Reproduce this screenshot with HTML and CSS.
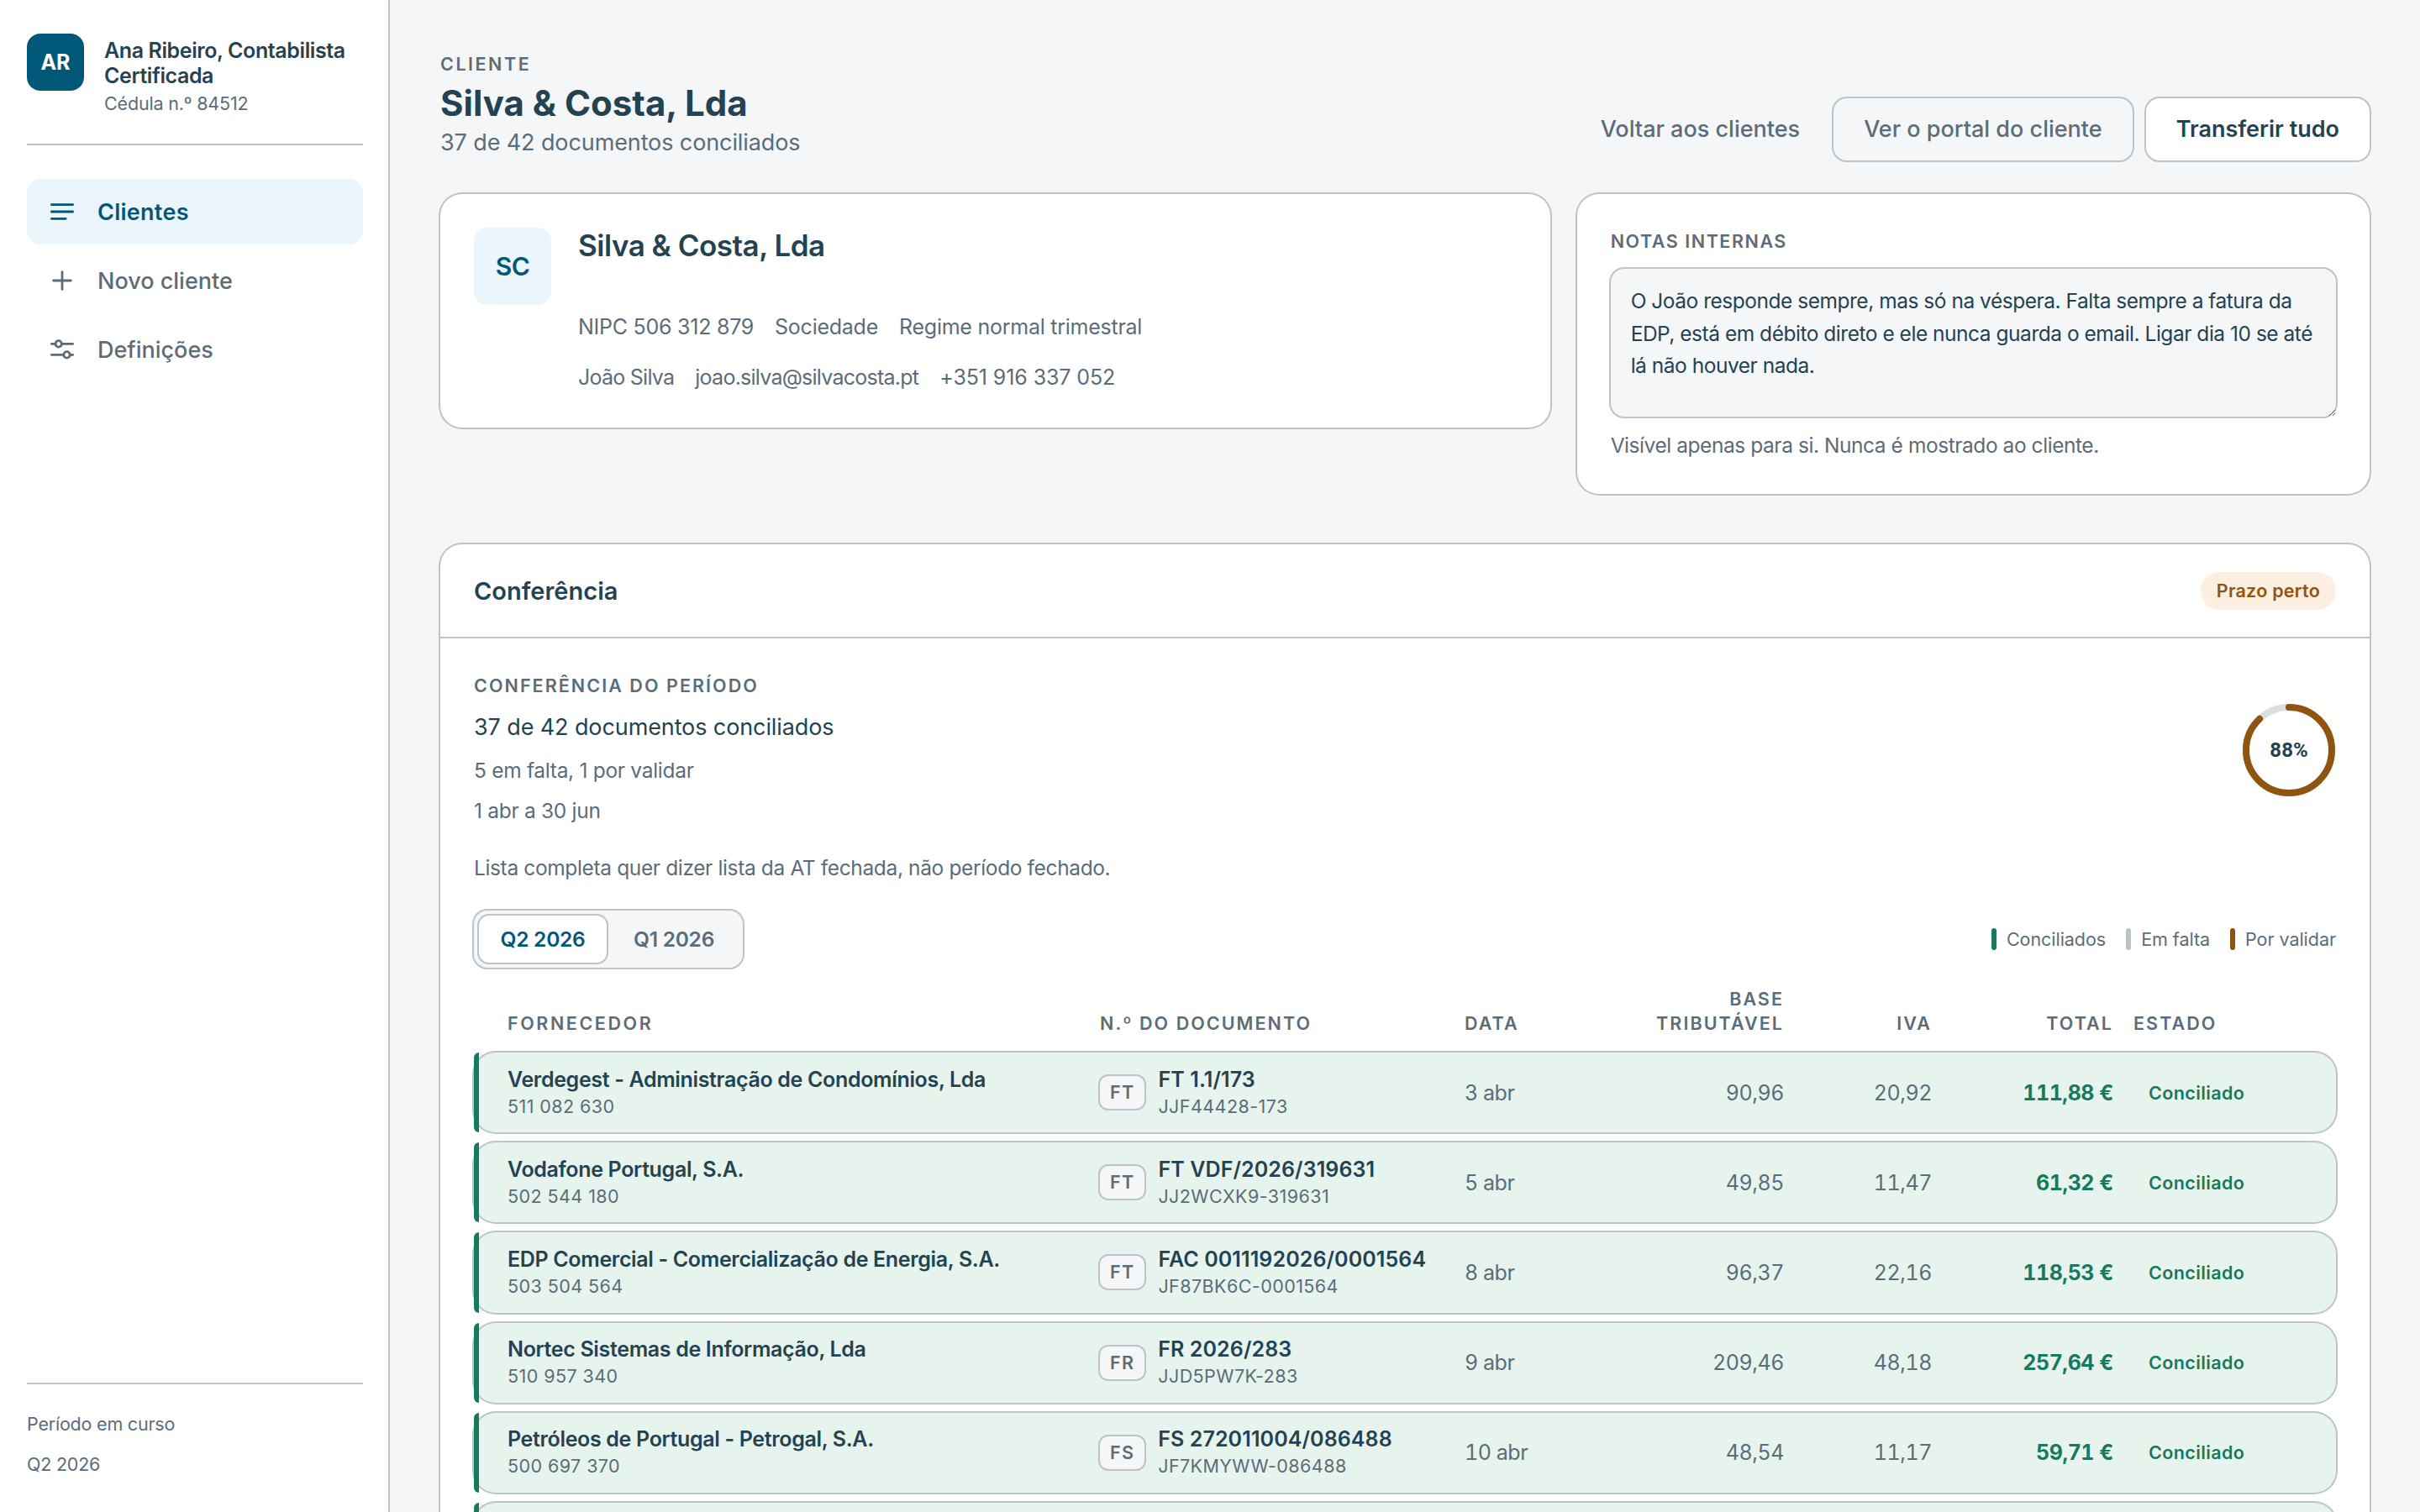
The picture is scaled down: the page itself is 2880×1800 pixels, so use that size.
FILE: index.html
```
<!DOCTYPE html>
<html lang="pt">
<head>
    <meta charset="UTF-8">
    <meta name="viewport" content="width=device-width, initial-scale=1.0">
    <title>Silva &amp; Costa, Lda</title>
    <link rel="stylesheet" href="styles.css">
</head>
<body>
    <div class="app">
        <aside class="sidebar">
            <div class="brand">
                <div class="logo">AR</div>
                <div class="brand-text">
                    <p class="brand-name">Ana Ribeiro, Contabilista Certificada</p>
                    <p class="brand-id">Cédula n.º 84512</p>
                </div>
            </div>
            <nav class="nav">
                <a class="nav-item active">
                    <svg class="nav-icon" viewBox="0 0 36 36"><path d="M5.4 9.7h25.2M5.4 18h25.2M5.4 26.3h16.8"/></svg>
                    Clientes
                </a>
                <a class="nav-item">
                    <svg class="nav-icon" viewBox="0 0 36 36"><path d="M18 7.6v20.8M7.6 18h20.8"/></svg>
                    Novo cliente
                </a>
                <a class="nav-item">
                    <svg class="nav-icon" viewBox="0 0 36 36"><path d="M5.4 11.4h4.6M17.4 11.4h13.2M5.4 24.4h14.4M27.2 24.4h3.4"/><circle cx="13.7" cy="11.4" r="3.7"/><circle cx="23.5" cy="24.4" r="3.7"/></svg>
                    Definições
                </a>
            </nav>
            <div class="sidebar-foot">
                <p>Período em curso</p>
                <p>Q2 2026</p>
            </div>
        </aside>

        <main class="main">
            <header class="page-head">
                <div>
                    <p class="label label-wide">Cliente</p>
                    <h1>Silva &amp; Costa, Lda</h1>
                    <p class="subtitle">37 de 42 documentos conciliados</p>
                </div>
                <div class="actions">
                    <a class="btn btn-ghost">Voltar aos clientes</a>
                    <a class="btn">Ver o portal do cliente</a>
                    <a class="btn btn-solid">Transferir tudo</a>
                </div>
            </header>

            <div class="top-grid">
                <section class="card client">
                    <div class="avatar">SC</div>
                    <div>
                        <h2>Silva &amp; Costa, Lda</h2>
                        <div class="facts"><span class="num">NIPC 506 312 879</span><span>Sociedade</span><span>Regime normal trimestral</span></div>
                        <div class="facts contact"><span>João Silva</span><span>joao.silva@silvacosta.pt</span><span class="phone">+351 916 337 052</span></div>
                    </div>
                </section>
                <section class="card notes">
                    <p class="label label-notes">Notas internas</p>
                    <textarea class="notes-input">O João responde sempre, mas só na véspera. Falta sempre a fatura da EDP, está em débito direto e ele nunca guarda o email. Ligar dia 10 se até lá não houver nada.</textarea>
                    <p class="hint">Visível apenas para si. Nunca é mostrado ao cliente.</p>
                </section>
            </div>

            <section class="panel">
                <div class="panel-head">
                    <h3>Conferência</h3>
                    <span class="badge">Prazo perto</span>
                </div>
                <div class="panel-body">
                    <div class="summary">
                        <div>
                            <p class="label">Conferência do período</p>
                            <p class="summary-main">37 de 42 documentos conciliados</p>
                            <p class="summary-sub">5 em falta, 1 por validar</p>
                            <p class="summary-date">1 abr a 30 jun</p>
                        </div>
                        <div class="ring">
                            <svg viewBox="0 0 112 112">
                                <circle class="ring-track" cx="56" cy="56" r="51"/>
                                <circle class="ring-value" cx="56" cy="56" r="51" pathLength="100" stroke-dasharray="88 100"/>
                            </svg>
                            <span>88%</span>
                        </div>
                    </div>
                    <p class="disclaimer">Lista completa quer dizer lista da AT fechada, não período fechado.</p>

                    <div class="toolbar">
                        <div class="tabs">
                            <button class="tab selected">Q2 2026</button>
                            <button class="tab">Q1 2026</button>
                        </div>
                        <div class="legend">
                            <span class="legend-item ok">Conciliados</span>
                            <span class="legend-item missing">Em falta</span>
                            <span class="legend-item pending">Por validar</span>
                        </div>
                    </div>

                    <div class="table">
                        <div class="row-grid table-head">
                            <span class="wide">Fornecedor</span>
                            <span>N.º do documento</span>
                            <span>Data</span>
                            <span class="right">Base tributável</span>
                            <span class="right">IVA</span>
                            <span class="right">Total</span>
                            <span>Estado</span>
                        </div>
                        <div class="row-grid row">
                            <div><p class="name">Verdegest - Administração de Condomínios, Lda</p><p class="small">511 082 630</p></div>
                            <div class="doc"><span class="tag">FT</span><div><p class="name doc-no">FT 1.1/173</p><p class="small">JJF44428-173</p></div></div>
                            <span class="cell">3 abr</span>
                            <span class="cell right">90,96</span>
                            <span class="cell right">20,92</span>
                            <span class="total right">111,88 €</span>
                            <span class="status">Conciliado</span>
                        </div>
                        <div class="row-grid row">
                            <div><p class="name">Vodafone Portugal, S.A.</p><p class="small">502 544 180</p></div>
                            <div class="doc"><span class="tag">FT</span><div><p class="name doc-no">FT VDF/2026/319631</p><p class="small">JJ2WCXK9-319631</p></div></div>
                            <span class="cell">5 abr</span>
                            <span class="cell right">49,85</span>
                            <span class="cell right">11,47</span>
                            <span class="total right">61,32 €</span>
                            <span class="status">Conciliado</span>
                        </div>
                        <div class="row-grid row">
                            <div><p class="name">EDP Comercial - Comercialização de Energia, S.A.</p><p class="small">503 504 564</p></div>
                            <div class="doc"><span class="tag">FT</span><div><p class="name doc-no">FAC 0011192026/0001564</p><p class="small">JF87BK6C-0001564</p></div></div>
                            <span class="cell">8 abr</span>
                            <span class="cell right">96,37</span>
                            <span class="cell right">22,16</span>
                            <span class="total right">118,53 €</span>
                            <span class="status">Conciliado</span>
                        </div>
                        <div class="row-grid row">
                            <div><p class="name">Nortec Sistemas de Informação, Lda</p><p class="small">510 957 340</p></div>
                            <div class="doc"><span class="tag">FR</span><div><p class="name doc-no">FR 2026/283</p><p class="small">JJD5PW7K-283</p></div></div>
                            <span class="cell">9 abr</span>
                            <span class="cell right">209,46</span>
                            <span class="cell right">48,18</span>
                            <span class="total right">257,64 €</span>
                            <span class="status">Conciliado</span>
                        </div>
                        <div class="row-grid row">
                            <div><p class="name">Petróleos de Portugal - Petrogal, S.A.</p><p class="small">500 697 370</p></div>
                            <div class="doc"><span class="tag">FS</span><div><p class="name doc-no">FS 272011004/086488</p><p class="small">JF7KMYWW-086488</p></div></div>
                            <span class="cell">10 abr</span>
                            <span class="cell right">48,54</span>
                            <span class="cell right">11,17</span>
                            <span class="total right">59,71 €</span>
                            <span class="status">Conciliado</span>
                        </div>
                        <div class="row-grid row"></div>
                    </div>
                </div>
            </section>
        </main>
    </div>
</body>
</html>
```
FILE: styles.css
```
:root {
    --bg: #f4f6f8;
    --ink: #244352;
    --muted: #5b6c7a;
    --line: #bac4ca;
    --brand: #005878;
    --brand-soft: #eaf6fb;
    --green: #157a5f;
    --green-soft: #e7f4ee;
    --amber: #8f5410;
    --amber-soft: #fcefe0;
}

* {
    box-sizing: border-box;
}

body {
    margin: 0;
    background: var(--bg);
    color: var(--ink);
    font-family: Inter, "Liberation Sans", sans-serif;
}

p, h1, h2, h3 {
    margin: 0;
}

.app {
    display: flex;
    height: 100vh;
    overflow: hidden;
}

/* sidebar */
.sidebar {
    display: flex;
    flex-direction: column;
    flex: none;
    width: 464px;
    padding: 40px 30px 39px 32px;
    background: #fff;
    border-right: 2px solid var(--line);
}

.brand {
    display: flex;
    gap: 24px;
    align-items: flex-start;
    padding-bottom: 30px;
    border-bottom: 2px solid var(--line);
}

.logo {
    flex: none;
    width: 68px;
    height: 68px;
    border-radius: 16px;
    background: var(--brand);
    color: #fff;
    font-size: 25px;
    font-weight: 700;
    line-height: 68px;
    text-align: center;
}

.brand-text {
    padding-top: 5px;
}

.brand-name {
    font-size: 25px;
    font-weight: 600;
    line-height: 30px;
    letter-spacing: -0.016em;
}

.brand-id {
    color: var(--muted);
    font-size: 21.5px;
    line-height: 36px;
    letter-spacing: -0.008em;
}

.nav {
    display: flex;
    flex-direction: column;
    gap: 4px;
    margin-top: 40px;
}

.nav-item {
    display: flex;
    align-items: center;
    gap: 24px;
    height: 78px;
    padding: 0 24px;
    border-radius: 16px;
    color: var(--muted);
    font-size: 27px;
    font-weight: 500;
}

.nav-item.active {
    background: var(--brand-soft);
    color: var(--brand);
    font-weight: 600;
    letter-spacing: 0.01em;
}

.nav-icon {
    width: 36px;
    height: 36px;
    fill: none;
    stroke: currentColor;
    stroke-width: 2.8;
    stroke-linecap: round;
}

.sidebar-foot {
    display: flex;
    flex-direction: column;
    gap: 12px;
    margin-top: auto;
    padding-top: 29px;
    border-top: 2px solid var(--line);
    color: var(--muted);
    font-size: 21.5px;
    line-height: 36px;
    letter-spacing: -0.01em;
}

/* page header */
.main {
    flex: 1;
    min-width: 0;
    padding: 60px 60px 0;
}

.page-head {
    display: flex;
    justify-content: space-between;
    align-items: flex-end;
    margin-bottom: 40px;
}

.label {
    color: var(--muted);
    font-size: 21.5px;
    font-weight: 600;
    line-height: 32px;
    letter-spacing: 0.096em;
    text-transform: uppercase;
}

.label-wide {
    letter-spacing: 0.118em;
}

.label-notes {
    letter-spacing: 0.072em;
}

h1 {
    margin-top: 4px;
    font-size: 42px;
    font-weight: 700;
    line-height: 53px;
}

.subtitle {
    color: var(--muted);
    font-size: 27px;
    line-height: 42px;
    letter-spacing: -0.004em;
}

.actions {
    display: flex;
    gap: 16px;
}

.btn {
    height: 74px;
    padding: 0 36px;
    border-radius: 16px;
    box-shadow: 0 0 0 2px var(--line);
    color: var(--muted);
    font-size: 27px;
    font-weight: 500;
    line-height: 74px;
}

.btn-ghost {
    padding: 0 24px;
    box-shadow: none;
}

.btn-solid {
    background: #fff;
    color: var(--ink);
    font-weight: 600;
}

/* client and notes */
.top-grid {
    display: grid;
    grid-template-columns: 1.4fr 1fr;
    gap: 32px;
    align-items: start;
}

.card {
    padding: 40px;
    border-radius: 26px;
    background: #fff;
    box-shadow: 0 0 0 2px var(--line);
}

.client {
    display: flex;
    gap: 32px;
}

.avatar {
    flex: none;
    width: 92px;
    height: 92px;
    border-radius: 16px;
    background: var(--brand-soft);
    color: var(--brand);
    font-size: 30px;
    font-weight: 600;
    line-height: 92px;
    letter-spacing: -0.02em;
    text-align: center;
}

h2 {
    font-size: 35px;
    font-weight: 600;
    line-height: 42px;
    letter-spacing: -0.014em;
}

.facts {
    display: flex;
    gap: 25px;
    margin-top: 56px;
    color: var(--muted);
    font-size: 25px;
    line-height: 40px;
    letter-spacing: -0.01em;
}

.contact {
    margin-top: 20px;
    letter-spacing: -0.03em;
}

.phone {
    letter-spacing: -0.004em;
}

.notes-input {
    display: block;
    width: 100%;
    height: 176px;
    margin-top: 17px;
    padding: 19px 24px;
    border: 0;
    border-radius: 16px;
    background: var(--bg);
    box-shadow: 0 0 0 2px var(--line);
    color: var(--ink);
    font: 24.5px/38.7px Inter, "Liberation Sans", sans-serif;
    letter-spacing: -0.0195em;
    resize: vertical;
}

.hint {
    margin-top: 16px;
    color: var(--muted);
    font-size: 24.5px;
    line-height: 36px;
    letter-spacing: -0.018em;
}

/* reconciliation panel */
.panel {
    margin-top: 60px;
    border-radius: 26px;
    background: #fff;
    box-shadow: 0 0 0 2px var(--line);
}

.panel-head {
    display: flex;
    justify-content: space-between;
    align-items: center;
    height: 112px;
    padding: 0 40px;
    border-bottom: 2px solid var(--line);
}

h3 {
    font-size: 29px;
    font-weight: 600;
}

.badge {
    padding: 0 19px;
    border-radius: 23px;
    background: var(--amber-soft);
    color: var(--amber);
    font-size: 21.5px;
    font-weight: 600;
    line-height: 45px;
    letter-spacing: 0.012em;
}

.panel-body {
    padding: 40px;
}

.summary {
    display: flex;
    justify-content: space-between;
    align-items: center;
    color: var(--muted);
    font-size: 24.5px;
    line-height: 40px;
    letter-spacing: -0.012em;
}

.summary-main {
    margin-top: 12px;
    color: var(--ink);
    font-size: 27px;
    line-height: 44px;
    letter-spacing: -0.004em;
}

.summary-sub {
    margin-top: 9px;
}

.summary-date {
    margin-top: 8px;
}

.ring {
    display: grid;
    place-items: center;
    width: 112px;
    height: 112px;
}

.ring svg, .ring span {
    grid-area: 1 / 1;
}

.ring svg {
    transform: rotate(-90deg);
    fill: none;
    stroke-width: 8;
}

.ring-track {
    stroke: #d8dee1;
}

.ring-value {
    stroke: var(--amber);
    stroke-linecap: round;
}

.ring span {
    color: var(--ink);
    font-family: Roboto, sans-serif;
    font-size: 24px;
    font-weight: 700;
    letter-spacing: 0;
}

.disclaimer {
    margin-top: 28px;
    color: var(--muted);
    font-size: 24.5px;
    line-height: 40px;
    letter-spacing: -0.015em;
}

.toolbar {
    display: flex;
    justify-content: space-between;
    align-items: center;
    margin-top: 31px;
}

.tabs {
    display: flex;
    gap: 4px;
    padding: 6px;
    border-radius: 16px;
    background: var(--bg);
    box-shadow: 0 0 0 2px var(--line);
}

.tab {
    width: 152px;
    height: 56px;
    padding: 0;
    border: 0;
    border-radius: 12px;
    background: none;
    color: var(--muted);
    font: 600 24.5px Inter, "Liberation Sans", sans-serif;
    letter-spacing: -0.01em;
}

.tab.selected {
    background: #fff;
    box-shadow: 0 0 0 2px var(--line);
    color: var(--brand);
}

.legend {
    display: flex;
    gap: 24px;
    color: var(--muted);
    font-size: 21.5px;
    letter-spacing: -0.002em;
}

.legend-item {
    display: flex;
    align-items: center;
    gap: 12px;
}

.legend-item::before {
    content: "";
    width: 6px;
    height: 26px;
    border-radius: 3px;
    background: var(--line);
}

.legend-item.ok::before {
    background: var(--green);
}

.legend-item.pending::before {
    background: var(--amber);
}

/* documents */
.table {
    display: flex;
    flex-direction: column;
    gap: 12px;
    margin-top: 23px;
}

.row-grid {
    display: grid;
    grid-template-columns: 681px 410px 150px 206px 152px 192px 1fr;
    column-gap: 24px;
    padding: 0 40px;
}

.table-head {
    align-items: end;
    padding-bottom: 9px;
    color: var(--muted);
    font-size: 21.5px;
    font-weight: 600;
    line-height: 28.5px;
    letter-spacing: 0.096em;
    text-transform: uppercase;
}

.table-head .wide {
    letter-spacing: 0.12em;
}

.right {
    text-align: right;
}

.row {
    position: relative;
    flex: none;
    align-items: center;
    height: 95.2px;
    border-radius: 26px;
    background: var(--green-soft);
    box-shadow: 0 0 0 2px var(--line);
}

.row::before {
    content: "";
    position: absolute;
    left: 0;
    top: 0;
    bottom: 0;
    width: 6px;
    border-radius: 6px 0 0 6px;
    background: var(--green);
}

.name {
    font-size: 25px;
    font-weight: 600;
    line-height: 32px;
    letter-spacing: -0.0135em;
    white-space: nowrap;
}

.doc-no {
    letter-spacing: 0.004em;
}

.small {
    color: var(--muted);
    font-size: 21.5px;
    line-height: 32px;
    letter-spacing: 0.02em;
}

.doc {
    display: flex;
    align-items: center;
    gap: 16px;
}

.tag {
    padding: 0 12px;
    border-radius: 10px;
    background: var(--bg);
    box-shadow: 0 0 0 2px var(--line);
    color: var(--muted);
    font-size: 21.5px;
    font-weight: 600;
    line-height: 39px;
    letter-spacing: 0.06em;
}

.cell {
    color: var(--muted);
    font-size: 25px;
    letter-spacing: -0.018em;
    font-variant-numeric: tabular-nums;
}

.total {
    color: var(--green);
    font-size: 25px;
    font-weight: 700;
    letter-spacing: -0.018em;
    font-variant-numeric: tabular-nums;
}

.status {
    padding-left: 18px;
    color: var(--green);
    font-size: 21.5px;
    font-weight: 600;
    letter-spacing: 0.018em;
}
```
